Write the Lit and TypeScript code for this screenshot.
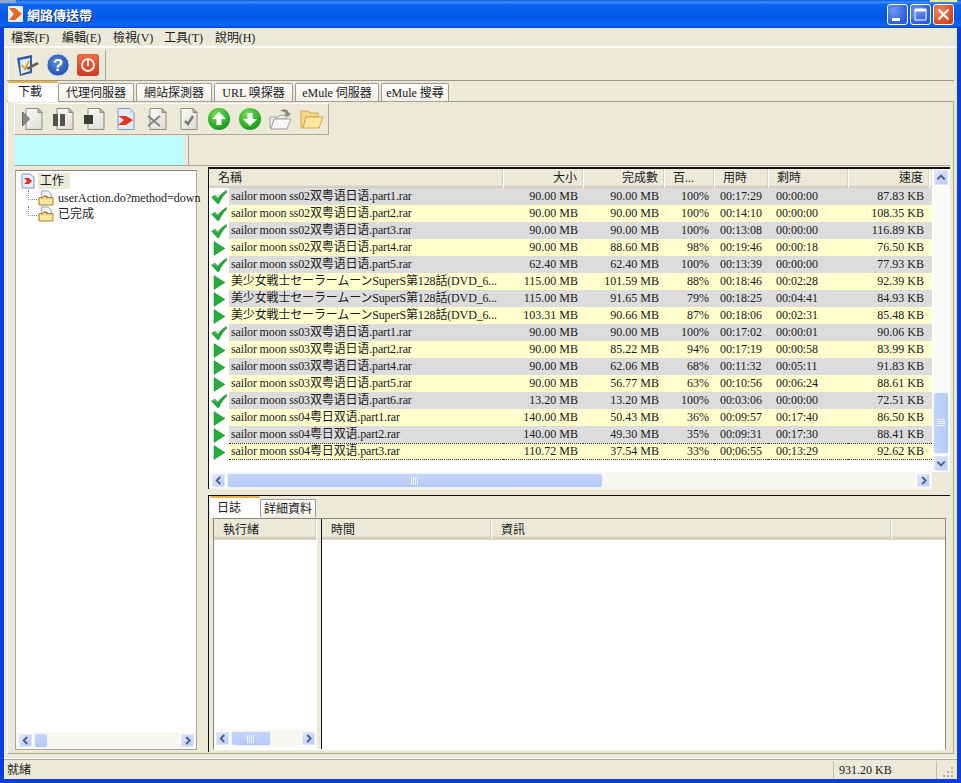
import { LitElement, html, css, svg } from "lit";
import { customElement } from "lit/decorators.js";

type R = [string, string, string, string, string, string, string, string];
const P = "sailor moon ";
const rows: R[] = [
  ["c", P + "ss02双粤语日语.part1.rar", "90.00 MB", "90.00 MB", "100%", "00:17:29", "00:00:00", "87.83 KB"],
  ["c", P + "ss02双粤语日语.part2.rar", "90.00 MB", "90.00 MB", "100%", "00:14:10", "00:00:00", "108.35 KB"],
  ["c", P + "ss02双粤语日语.part3.rar", "90.00 MB", "90.00 MB", "100%", "00:13:08", "00:00:00", "116.89 KB"],
  ["p", P + "ss02双粤语日语.part4.rar", "90.00 MB", "88.60 MB", "98%", "00:19:46", "00:00:18", "76.50 KB"],
  ["c", P + "ss02双粤语日语.part5.rar", "62.40 MB", "62.40 MB", "100%", "00:13:39", "00:00:00", "77.93 KB"],
  ["p", "美少女戦士セーラームーンSuperS第128話(DVD_6...", "115.00 MB", "101.59 MB", "88%", "00:18:46", "00:02:28", "92.39 KB"],
  ["p", "美少女戦士セーラームーンSuperS第128話(DVD_6...", "115.00 MB", "91.65 MB", "79%", "00:18:25", "00:04:41", "84.93 KB"],
  ["p", "美少女戦士セーラームーンSuperS第128話(DVD_6...", "103.31 MB", "90.66 MB", "87%", "00:18:06", "00:02:31", "85.48 KB"],
  ["c", P + "ss03双粤语日语.part1.rar", "90.00 MB", "90.00 MB", "100%", "00:17:02", "00:00:01", "90.06 KB"],
  ["p", P + "ss03双粤语日语.part2.rar", "90.00 MB", "85.22 MB", "94%", "00:17:19", "00:00:58", "83.99 KB"],
  ["p", P + "ss03双粤语日语.part4.rar", "90.00 MB", "62.06 MB", "68%", "00:11:32", "00:05:11", "91.83 KB"],
  ["p", P + "ss03双粤语日语.part5.rar", "90.00 MB", "56.77 MB", "63%", "00:10:56", "00:06:24", "88.61 KB"],
  ["c", P + "ss03双粤语日语.part6.rar", "13.20 MB", "13.20 MB", "100%", "00:03:06", "00:00:00", "72.51 KB"],
  ["p", P + "ss04粤日双语.part1.rar", "140.00 MB", "50.43 MB", "36%", "00:09:57", "00:17:40", "86.50 KB"],
  ["p", P + "ss04粤日双语.part2.rar", "140.00 MB", "49.30 MB", "35%", "00:09:31", "00:17:30", "88.41 KB"],
  ["p", P + "ss04粤日双语.part3.rar", "110.72 MB", "37.54 MB", "33%", "00:06:55", "00:13:29", "92.62 KB"],
];

const check = html`<svg class="st" viewBox="0 0 16 16"><path d="M.5 8.200L3.800 6l3.200 3C9 6 12 3.200 15.600 1.200l.2 2C12.800 6 10 10 7.800 14.800h-1.300z" fill="#2aa63e" stroke="#1c8f30" stroke-width=".4"/><path d="M2 8l2-1 3 3" fill="none" stroke="#63c96f" stroke-width=".8"/></svg>`;
const play = html`<svg class="st" viewBox="0 0 16 16"><path d="M3 1.500l11 7-11 7z" fill="#27ab3b" stroke="#1b8f2e" stroke-width=".5"/></svg>`;

const chev = (d: "l" | "r" | "u" | "d") => {
  const p = { l: "M9.500 3.500L5.500 7.500l4 4", r: "M6 3.500l4 4-4 4", u: "M3.500 9.500l4-4 4 4", d: "M3.500 5.500l4 4 4-4" }[d];
  return html`<svg class="chev" viewBox="0 0 15 15"><path d="${p}" fill="none" stroke="#4d6185" stroke-width="2.200"/></svg>`;
};

const grip = (v: boolean) => html`<svg class="gr" width="8" height="8" viewBox="0 0 8 8">${[0, 2, 4, 6].map(i =>
  v ? svg`<rect x="0" y="${i}" width="8" height="1" fill="#eef4fe"/>` : svg`<rect x="${i}" y="0" width="1" height="8" fill="#eef4fe"/>`)}</svg>`;

const hbar = (thumb: number, g = true) => html`
  <div class="hbar">
    <div class="arrow">${chev("l")}</div>
    <div class="thumb" style="width:${thumb}px">${g ? grip(false) : ""}</div>
    <div class="fill"></div>
    <div class="arrow">${chev("r")}</div>
  </div>`;

const docBase = (inner: unknown) => html`<svg class="tb" viewBox="0 0 24 24">
  <defs><linearGradient id="dg" x1="0" y1="0" x2="1" y2="1"><stop offset="0" stop-color="#fbfbf8"/><stop offset="1" stop-color="#dcdcd6"/></linearGradient></defs>
  <path d="M5 1.500h12l4 4v17H5z" fill="url(#dg)" stroke="#8d8d86"/><path d="M17 1.500v4h4z" fill="#bcbcb4" stroke="#8d8d86"/>${inner}</svg>`;

const folderTree = html`<svg class="ti" viewBox="0 0 17 17">
  <path d="M4 1h7l3 3v6H4z" fill="#f4f6fb" stroke="#8a9cc0"/><path d="M6 5l5 2-5 2 1.500-2z" fill="#d8432c"/>
  <path d="M1 8h4l1-1.500h2L9 8h7v8H1z" fill="#f3cf7c" stroke="#a8802d"/><path d="M2 10h13v5H2z" fill="#fbe7a8"/></svg>`;

const upDown = (down: boolean) => html`<svg class="tb" viewBox="0 0 24 24">
  <defs><radialGradient id="g${down ? 1 : 0}" cx=".4" cy=".3" r=".8"><stop offset="0" stop-color="#7ede5c"/><stop offset=".6" stop-color="#2fb32c"/><stop offset="1" stop-color="#138a1c"/></radialGradient></defs>
  <circle cx="12" cy="12" r="11" fill="url(#g${down ? 1 : 0})"/>
  <path d="${down ? "M12 19l-7-7h4.500V6h5v6H19z" : "M12 5l7 7h-4.500v6h-5v-6H5z"}" fill="#fff"/></svg>`;

@customElement("app-root")
export class AppRoot extends LitElement {
  static styles = css`
    :host { display: block; width: 961px; height: 783px; overflow: hidden; font: 12px/1 "Liberation Serif", "Noto Sans CJK TC", serif; color: #1a1a1a; }
    * { box-sizing: border-box; }
    .win { width: 961px; height: 783px; display: flex; flex-direction: column; padding: 0 4px 4px; background: #0a3ee0; position: relative; }
    .win::before { content: ""; position: absolute; left: 0; top: 0; width: 16px; height: 3px; background: #8ea6c8; }
    .win::after { content: ""; position: absolute; right: 4px; top: 0; width: 27px; height: 2px; background: #f2e9a0; }
    .title { height: 28px; margin: 0 -4px; padding: 0 7px 0 8px; display: flex; align-items: center; flex: none; background: linear-gradient(#0a5ae0 0, #3c8ffb 2px, #0a64ee 5px, #0558e6 18px, #0a67f0 25px, #0446d2 28px); }
    .title svg { width: 15px; height: 16px; margin-right: 4px; }
    .title b { color: #fff; font: bold 13px "Liberation Sans", "Noto Sans CJK TC", sans-serif; text-shadow: 1px 1px 0 #0a2f8c; flex: 1; }
    .wb { width: 21px; height: 21px; margin-left: 2px; border: 1px solid #fff; border-radius: 3px; background: radial-gradient(circle at 30% 30%, #6f97ee, #2b5be0 75%); display: flex; align-items: center; justify-content: center; }
    .wb.x { background: radial-gradient(circle at 30% 30%, #e98a68, #d5441c 75%); }
    .wb svg { width: 19px; height: 19px; margin: 0; }
    .client { flex: 1; min-height: 0; display: flex; flex-direction: column; background: #ece9d8; }
    .menu { height: 20px; flex: none; display: flex; align-items: center; padding: 1px 0 0 7px; border-bottom: 1px solid #fff; box-shadow: 0 -1px 0 #fff inset; }
    .menu span { width: 51px; flex: none; white-space: nowrap; letter-spacing: -.1px; }
    .bar1 { height: 32px; flex: none; padding: 2px 0 0 4px; }
    .tbx { display: inline-flex; align-items: center; height: 30px; border-left: 1px solid #fff; border-right: 1px solid #aca899; }
    .bar1 .tbx { width: 98px; gap: 6px; padding-left: 7px; }
    .tbx .tb { width: 24px; height: 24px; flex: none; }
    .tabwrap { flex: 1; min-height: 0; display: flex; flex-direction: column; border-top: 1px solid #9d9a88; margin: 0 3px 0 3px; }
    .tabs { height: 21px; flex: none; display: flex; align-items: flex-end; padding-left: 1px; border-bottom: 1px solid #a5a291; }
    .tab { height: 18px; margin-right: 2px; border: 1px solid #a09d8d; border-bottom: 0; border-radius: 2px 2px 0 0; display: flex; align-items: center; justify-content: center; padding-top: 1px; background: linear-gradient(#fff, #f1efe4); white-space: nowrap; }
    .tab.on { height: 21px; margin: 0 0 -1px 0; border: 0; border-top: 2px solid #f0b040; background: #fff; justify-content: flex-start; padding: 0 0 2px 10px; position: relative; z-index: 1; }
    .t0 { width: 50px; } .t1 { width: 76px; } .t2 { width: 76px; } .t3 { width: 79px; } .t4 { width: 84px; } .t5 { width: 68px; }
    .panel { flex: 1; min-height: 0; display: flex; flex-direction: column; border-left: 1px solid #fff; border-right: 1px solid #aca899; border-bottom: 1px solid #aca899; padding: 1px 3px 1px 6px; }
    .bar2 { height: 32px; flex: none; }
    .bar2 .tbx { width: 315px; gap: 7px; padding-left: 6px; height: 32px; border-top: 1px solid #fff; border-bottom: 1px solid #aca899; }
    .cy { height: 31px; flex: none; display: flex; border-bottom: 1px solid #aca899; }
    .cy i { display: block; width: 169px; height: 29px; margin: 1px 0 0 1px; background: #bcfeff; }
    .cy u { display: block; width: 1px; margin-left: 4px; background: #aca899; text-decoration: none; }
    .main { flex: 1; min-height: 0; display: flex; gap: 11px; padding-top: 1px; }
    .left { width: 182px; flex: none; display: flex; flex-direction: column; border: 1px solid #aca899; border-top-color: #8a8778; background: #fff; margin: 3px 0 2px 1px; }
    .tree { flex: 1; min-height: 0; padding: 0 0 0 4px; }
    .tn { display: flex; align-items: center; height: 16px; white-space: nowrap; }
    .tn.rt { height: 19px; }
    .tn.c { padding-left: 18px; position: relative; }
    .tn.c::before { content: ""; position: absolute; left: 8px; top: 0; width: 10px; height: 9px; border-left: 1px dotted #888; border-bottom: 1px dotted #888; }
    .ti { width: 16px; height: 16px; flex: none; margin-right: 4px; }
    .ri { margin-right: 2px; }
    .root { background: #ece9d8; padding: 2px 6px 2px 2px; }
    .right { flex: 1; min-width: 0; display: flex; flex-direction: column; }
    .top { height: 322px; flex: none; display: flex; flex-direction: column; border-left: 1px solid #111; border-top: 2px solid #111; background: #fff; }
    .topin { flex: 1; min-height: 0; display: flex; }
    .lst { flex: 1; min-width: 0; }
    .hd { height: 19px; display: grid; background: linear-gradient(#ece9d8, #ece9d8 16px, #d9d6c5 17px, #cfccba); }
    .hd span { padding: 3px 5px 0 9px; border-right: 1px solid #d4d1bf; box-shadow: 1px 0 0 #fff; white-space: nowrap; overflow: hidden; }
    .hd .w2 { grid-column: span 2; }
    .hd .e { padding: 0; border: 0; box-shadow: none; }
    .r { text-align: right; }
    .row { height: 17px; display: grid; align-items: center; white-space: nowrap; }
    .row > * { padding: 0 5px; }
    .nm { overflow: hidden; padding-left: 2px !important; height: 17px; line-height: 17px; letter-spacing: -.15px; }
    .ic { height: 17px; padding: 0 !important; display: flex; align-items: center; justify-content: center; background: #fff; width: 20px; }
    .st { width: 16px; height: 16px; margin-left: 0; }
    .cell { height: 17px; line-height: 17px; }
    .tm { padding: 0 0 0 6px !important; letter-spacing: -.1px; }
    .rm { padding: 0 0 0 8px !important; letter-spacing: -.1px; }
    .sp { padding-right: 8px !important; }
    .row.a .bg { background: #dcdcdc; }
    .row.b .bg { background: #ffffcd; }
    .row.sel .bg { border-top: 1px dotted #333; border-bottom: 1px dotted #333; line-height: 15px; }
    .vbar { width: 16px; flex: none; display: flex; flex-direction: column; background: #fbfbf6; margin: 0 1px 0 1px; }
    .arrow { width: 15px; height: 15px; flex: none; border: 1px solid #fff; border-radius: 2px; background: linear-gradient(135deg, #e1eafe, #b4c9f6); display: flex; box-shadow: 0 0 0 1px #dfe6f7 inset; }
    .chev { width: 13px; height: 13px; }
    .vbar .arrow { width: 16px; height: 17px; }
    .vbar .chev { width: 14px; height: 15px; }
    .vthumb { height: 62px; margin-top: auto; margin-bottom: 1px; background: linear-gradient(90deg, #c5d5fb, #b5caf6); border: 1px solid #eef3ff; border-radius: 3px; display: flex; align-items: center; justify-content: center; }
    .hwrap { height: 17px; flex: none; display: flex; background: #ece9d8; }
    .hwrap .hbar { flex: 1; min-width: 0; }
    .corner { width: 18px; flex: none; }
    .hbar { height: 17px; flex: none; display: flex; align-items: center; background: #f8f7f0; padding: 0 1px 0 2px; }
    .fill { flex: 1; }
    .thumb { height: 15px; flex: none; margin-left: 1px; background: linear-gradient(#c5d5fb, #b5caf6); border: 1px solid #eef3ff; border-radius: 3px; display: flex; align-items: center; justify-content: center; }
    .split { height: 7px; flex: none; border-bottom: 1px solid #111; }
    .low { flex: 1; min-height: 0; display: flex; flex-direction: column; border-left: 1px solid #111; padding: 0 0 2px 0; }
    .ltabs { height: 22px; flex: none; display: flex; align-items: flex-end; padding-left: 1px; }
    .ltabs .tab { height: 18px; width: 56px; margin: 0 0 1px 0; }
    .ltabs .tab.on { width: 50px; height: 22px; margin: 0; padding: 0 0 1px 7px; }
    .lists { flex: 1; min-height: 0; display: flex; margin: 0 4px; border: 1px solid #8a8778; border-bottom-color: #fff; background: #ece9d8; }
    .lc { display: flex; flex-direction: column; width: 103px; flex: none; background: #fff; }
    .lr { flex: 1; border-left: 1px solid #111; margin-left: 4px; display: flex; flex-direction: column; background: #fff; }
    .lhd { height: 21px; flex: none; display: flex; background: linear-gradient(#ece9d8, #ece9d8 17px, #d9d6c5 18px, #cfccba); border-bottom: 1px solid #d8d5c4; }
    .lhd span { padding: 5px 0 0 9px; border-right: 1px solid #cfccba; box-shadow: 1px 0 0 #fff; }
    .c0 { width: 102px; } .c1 { width: 169px; } .c2 { width: 400px; padding-left: 10px !important; }
    .lbody { flex: 1; }
    .lc .hbar { background: #f8f7f0; padding: 0 1px; height: 17px; margin-bottom: 2px; }
    .status { height: 20px; flex: none; margin-top: 5px; border-top: 1px solid #aca899; box-shadow: 0 -1px 0 #fff; display: flex; align-items: center; padding-left: 3px; }
    .status > span { flex: 1; }
    .status .kb { flex: none; width: 104px; height: 18px; line-height: 18px; padding-left: 5px; border-left: 1px solid #c0bdac; border-right: 1px solid #c0bdac; }
    .status .rg { width: 20px; flex: none; display: flex; justify-content: flex-end; padding: 5px 3px 0 0; }
  `;

  render() {
    const cols = "20px 274px 80px 81px 50px 54px 80px 81px";
    const hcols = cols + " 1fr";
    const tb2 = [
      docBase(svg`<path d="M1.500 5l7 7-7 7z" fill="#8c8c86" stroke="#666"/>`),
      docBase(svg`<rect x="1" y="7" width="5" height="12" fill="#55554f"/><rect x="8" y="7" width="5" height="12" fill="#55554f"/>`),
      docBase(svg`<rect x="1" y="8" width="9" height="9" fill="#3c3c38"/>`),
      html`<svg class="tb" viewBox="0 0 24 24"><path d="M4 1.500h12l4 4v17H4z" fill="#e4ecfb" stroke="#7e97c6"/><path d="M16 1.500v4h4z" fill="#bccdec"/><path d="M4 9h8l7 4-7 5H4l6-5z" fill="#e0351c"/></svg>`,
      docBase(svg`<path d="M3 9l12 10M15 9L3 19" stroke="#85857f" stroke-width="2"/>`),
      docBase(svg`<path d="M9 14l3 3 5-8" fill="none" stroke="#7a7a74" stroke-width="2.500"/>`),
      upDown(false),
      upDown(true),
      html`<svg class="tb" viewBox="0 0 24 24"><path d="M1 10h8l2-2 6 1v3H6l-3 9H1z" fill="#ededed" stroke="#a0a09a"/><path d="M5 12h17l-4 10H2z" fill="#f6f6f6" stroke="#a0a09a"/><path d="M11 4c4-3 8-2 9 2l2 0-3 4-4-3h2c-1-2-3-3-6-3z" fill="#8a8a86"/></svg>`,
      html`<svg class="tb" viewBox="0 0 24 24"><path d="M1 4h7l2 2h8v4H6l-3 11H1z" fill="#f4d98a" stroke="#d2a94a"/><path d="M6 10h17l-4 11H3z" fill="#fbe7a4" stroke="#d2a94a"/></svg>`,
    ];
    return html`<div class="win">
      <div class="title">
        <svg viewBox="0 0 15 16"><rect width="15" height="16" rx="1" fill="#e9eef8"/><path d="M1 2h6l7 6-7 6H1l5-6z" fill="#e8651c"/></svg>
        <b>網路傳送帶</b>
        <div class="wb"><svg viewBox="0 0 19 19"><rect x="4" y="13" width="8" height="3" fill="#fff"/></svg></div>
        <div class="wb"><svg viewBox="0 0 19 19"><path d="M4 4h11v11H4z" fill="none" stroke="#fff"/><rect x="4" y="4" width="11" height="2.500" fill="#fff"/></svg></div>
        <div class="wb x"><svg viewBox="0 0 19 19"><path d="M4.500 4.500l10 10M14.500 4.500l-10 10" stroke="#fff" stroke-width="2"/></svg></div>
      </div>
      <div class="client">
        <div class="menu"><span>檔案(F)</span><span>編輯(E)</span><span>檢視(V)</span><span>工具(T)</span><span>說明(H)</span></div>
        <div class="bar1"><div class="tbx">
          <svg class="tb" viewBox="0 0 24 24"><path d="M1 5l15-3v18L4 23z" fill="#2f5fa8"/><path d="M4 7l10-2v13l-9 3z" fill="#e4ecf6"/><path d="M6 12l3 4 4-8" fill="none" stroke="#d4a72a" stroke-width="2"/><path d="M10 15l11-6 2 2-11 6z" fill="#7a5a48"/></svg>
          <svg class="tb" viewBox="0 0 24 24"><defs><radialGradient id="hb" cx=".45" cy=".4" r=".6"><stop offset="0" stop-color="#5a8ee0"/><stop offset="1" stop-color="#1f4fb0"/></radialGradient></defs><circle cx="12" cy="12" r="11" fill="url(#hb)" stroke="#cfdcf6"/><text x="12" y="18" text-anchor="middle" font-family="Liberation Sans" font-weight="bold" font-size="17" fill="#fff">?</text></svg>
          <svg class="tb" viewBox="0 0 24 24"><defs><linearGradient id="pw" x1="0" y1="0" x2="0" y2="1"><stop offset="0" stop-color="#ee6a48"/><stop offset="1" stop-color="#cc3a22"/></linearGradient></defs><rect x="1" y="1" width="22" height="22" rx="3" fill="url(#pw)"/><circle cx="12" cy="12" r="6" fill="none" stroke="#fde8dc" stroke-width="2"/><path d="M12 7v6" stroke="#fde8dc" stroke-width="2"/></svg>
        </div></div>
        <div class="tabwrap">
          <div class="tabs">
            <div class="tab on t0">下載</div>
            <div class="tab t1">代理伺服器</div>
            <div class="tab t2">網站探測器</div>
            <div class="tab t3">URL 嗅探器</div>
            <div class="tab t4">eMule 伺服器</div>
            <div class="tab t5">eMule 搜尋</div>
          </div>
          <div class="panel">
            <div class="bar2"><div class="tbx">${tb2}</div></div>
            <div class="cy"><i></i><u></u></div>
            <div class="main">
              <div class="left">
                <div class="tree">
                  <div class="tn rt"><svg class="ti ri" viewBox="0 0 16 16"><path d="M2 1h8l4 3v11H2z" fill="#e8eef9" stroke="#7e97c6"/><path d="M4 5h5l3 3-3 3H4l3-3z" fill="#e0351c"/></svg><span class="root">工作</span></div>
                  <div class="tn c">${folderTree}<span>userAction.do?method=down</span></div>
                  <div class="tn c">${folderTree}<span>已完成</span></div>
                </div>
                ${hbar(14, false)}
              </div>
              <div class="right">
                <div class="top">
                  <div class="topin">
                    <div class="lst">
                      <div class="hd" style="grid-template-columns:${hcols}">
                        <span class="w2">名稱</span><span class="r">大小</span><span class="r">完成數</span><span>百...</span><span>用時</span><span>剩時</span><span class="r">速度</span><span class="e"></span>
                      </div>
                      ${rows.map((r, i) => html`<div class="row ${i % 2 ? "b" : "a"} ${i === 15 ? "sel" : ""}" style="grid-template-columns:20px 274px 80px 81px 50px 54px 80px 1fr">
                        <div class="ic">${r[0] === "c" ? check : play}</div>
                        <div class="nm bg">${r[1]}</div>
                        <div class="cell r bg">${r[2]}</div><div class="cell r bg">${r[3]}</div><div class="cell r bg">${r[4]}</div>
                        <div class="cell tm bg">${r[5]}</div><div class="cell rm bg">${r[6]}</div><div class="cell r sp bg">${r[7]}</div>
                      </div>`)}
                    </div>
                    <div class="vbar">
                      <div class="arrow">${chev("u")}</div>
                      <div class="vthumb">${grip(true)}</div>
                      <div class="arrow">${chev("d")}</div>
                    </div>
                  </div>
                  <div class="hwrap">${hbar(376)}<div class="corner"></div></div>
                </div>
                <div class="split"></div>
                <div class="low">
                  <div class="ltabs"><div class="tab on">日誌</div><div class="tab">詳細資料</div></div>
                  <div class="lists">
                    <div class="lc">
                      <div class="lhd"><span class="c0">執行緒</span></div>
                      <div class="lbody"></div>
                      ${hbar(40)}
                    </div>
                    <div class="lr">
                      <div class="lhd"><span class="c1">時間</span><span class="c2">資訊</span></div>
                      <div class="lbody"></div>
                    </div>
                  </div>
                </div>
              </div>
            </div>
          </div>
        </div>
        <div class="status">
          <span>就緒</span><div class="kb">931.20 KB</div>
          <div class="rg"><svg width="11" height="11" viewBox="0 0 11 11" fill="#b5b29f"><rect x="8" y="0" width="2" height="2"/><rect x="4" y="4" width="2" height="2"/><rect x="8" y="4" width="2" height="2"/><rect x="0" y="8" width="2" height="2"/><rect x="4" y="8" width="2" height="2"/><rect x="8" y="8" width="2" height="2"/></svg></div>
        </div>
      </div>
    </div>`;
  }
}
